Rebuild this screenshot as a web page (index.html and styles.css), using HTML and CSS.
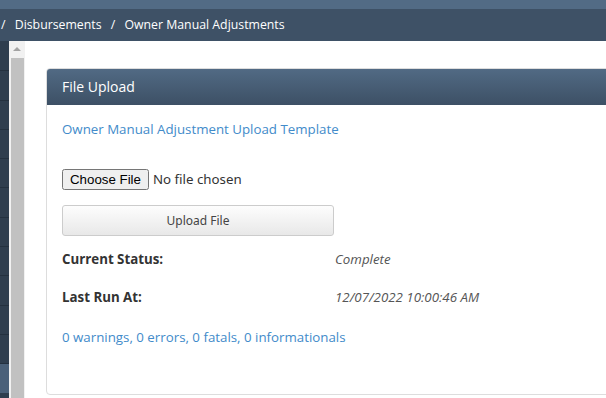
FILE: index.html
```html
<html>
  <head>
    <title>Owner Manual Adjustments</title>
    <link rel="stylesheet" href="styles.css">
  </head>
  <body>
    <div class="topbar"></div>
    <div class="crumbs">
      <span class="sep">/</span>
      <a href="#">Disbursements</a>
      <span class="sep">/</span>
      <span>Owner Manual Adjustments</span>
    </div>
    <div class="layout">
      <div class="sidenav">
        <div class="navitem"></div>
        <div class="navitem"></div>
        <div class="navitem"></div>
        <div class="navitem"></div>
        <div class="navitem"></div>
        <div class="navitem"></div>
        <div class="navitem"></div>
        <div class="navitem"></div>
        <div class="navitem"></div>
        <div class="navitem"></div>
        <div class="navitem"></div>
        <div class="navitem active"></div>
      </div>
      <div class="scrollbar">
        <div class="arrow"></div>
        <div class="thumb"></div>
      </div>
      <div class="main">
        <div class="card">
          <div class="card-head">File Upload</div>
          <div class="card-body">
            <a class="link" href="#">Owner Manual Adjustment Upload Template</a>
            <div class="file-row">
              <input type="file" class="file">
            </div>
            <button class="upload">Upload File</button>
            <div class="row first">
              <span class="label">Current Status:</span>
              <span class="value">Complete</span>
            </div>
            <div class="row">
              <span class="label">Last Run At:</span>
              <span class="value">12/07/2022 10:00:46 AM</span>
            </div>
            <a class="link summary" href="#">0 warnings, 0 errors, 0 fatals, 0 informationals</a>
          </div>
        </div>
      </div>
    </div>
  </body>
</html>
```

FILE: styles.css
```css
body {
    margin: 0;
    padding: 0;
    overflow: hidden;
    font-family: "Open Sans", "Liberation Sans", sans-serif;
    font-size: 13.3px;
    color: #333;
}

.topbar {
    height: 9px;
    background-color: #526b85;
}

.crumbs {
    height: 32px;
    line-height: 31px;
    background-color: #3e5166;
    color: #fff;
    font-size: 12.3px;
    padding-left: 1px;
    white-space: nowrap;
}

.crumbs a {
    color: #fff;
    text-decoration: none;
}

.crumbs .sep {
    margin: 0 6px 0 0;
}

.crumbs a + .sep {
    margin: 0 6px 0 6px;
}

.layout {
    display: flex;
    height: 357px;
}

.sidenav {
    width: 9px;
    background-color: #2f3e4f;
    padding-top: 1px;
}

.navitem {
    height: 28.3px;
    border-bottom: 1px solid #243140;
}

.navitem.active {
    background-color: #4a6079;
    border-bottom: none;
    height: 29px;
}

.scrollbar {
    width: 16px;
    background-color: #f1f1f1;
    display: flex;
    flex-direction: column;
    align-items: center;
}

.arrow {
    margin-top: 6px;
    width: 0;
    height: 0;
    border-left: 4px solid transparent;
    border-right: 4px solid transparent;
    border-bottom: 4px solid #a3a3a3;
}

.thumb {
    margin-top: 7px;
    width: 13px;
    flex: 1;
    background-color: #c1c1c1;
}

.main {
    flex: 1;
    background-color: #fff;
    padding: 27px 0 0 21px;
    overflow: hidden;
}

.card {
    width: 620px;
    border: 1px solid #ddd;
    border-radius: 4px;
    overflow: hidden;
}

.card-head {
    height: 36px;
    line-height: 36px;
    padding-left: 15px;
    color: #fff;
    font-size: 14px;
    background: linear-gradient(#516a84, #3d5065);
}

.card-body {
    padding: 14px 15px 47px 15px;
}

.link {
    display: block;
    line-height: 20px;
    color: #428bca;
    text-decoration: none;
}

.file-row {
    margin-top: 30px;
    height: 21px;
}

.file {
    font-family: "Noto Sans", "Liberation Sans", sans-serif;
    font-size: 13.3px;
    color: #333;
}

.upload {
    display: block;
    margin-top: 15px;
    width: 272px;
    height: 31px;
    border: 1px solid #ccc;
    border-radius: 3px;
    background: linear-gradient(#fdfdfd, #e8e8e8);
    font-family: "Noto Sans", "Liberation Sans", sans-serif;
    font-size: 12px;
    color: #444;
}

.row {
    display: flex;
    line-height: 20px;
    margin-top: 18px;
}

.row.first {
    margin-top: 13px;
}

.label {
    width: 273px;
    font-weight: bold;
    color: #333;
}

.value {
    font-style: italic;
    color: #555;
}

.summary {
    margin-top: 20px;
}
```
